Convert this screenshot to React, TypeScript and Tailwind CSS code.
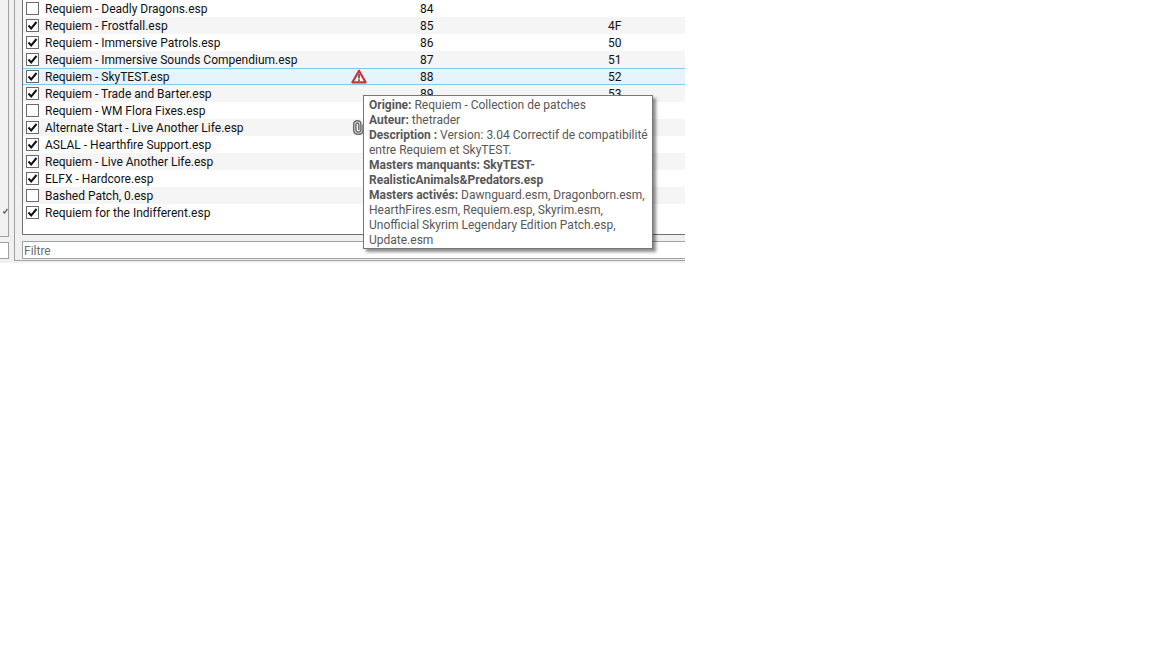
const plugins = [
  { name: "Requiem - Deadly Dragons.esp", on: false, prio: "84", idx: "" },
  { name: "Requiem - Frostfall.esp", on: true, prio: "85", idx: "4F" },
  { name: "Requiem - Immersive Patrols.esp", on: true, prio: "86", idx: "50" },
  { name: "Requiem - Immersive Sounds Compendium.esp", on: true, prio: "87", idx: "51" },
  { name: "Requiem - SkyTEST.esp", on: true, prio: "88", idx: "52", warn: true, selected: true },
  { name: "Requiem - Trade and Barter.esp", on: true, prio: "89", idx: "53" },
  { name: "Requiem - WM Flora Fixes.esp", on: false, prio: "", idx: "" },
  { name: "Alternate Start - Live Another Life.esp", on: true, prio: "", idx: "", clip: true },
  { name: "ASLAL - Hearthfire Support.esp", on: true, prio: "", idx: "" },
  { name: "Requiem - Live Another Life.esp", on: true, prio: "", idx: "" },
  { name: "ELFX - Hardcore.esp", on: true, prio: "", idx: "" },
  { name: "Bashed Patch, 0.esp", on: false, prio: "", idx: "" },
  { name: "Requiem for the Indifferent.esp", on: true, prio: "", idx: "" },
];

function WarnIcon() {
  return (
    <svg width="16" height="15" viewBox="0 0 16 15" className="-ml-[1px]">
      <path d="M8 1.8 L14.6 13.3 H1.4 Z" fill="#fdf4f4" stroke="#c8343c" strokeWidth="2.2" strokeLinejoin="round" />
      <rect x="7" y="5" width="2" height="4.5" fill="#6b6b6b" />
      <rect x="7" y="10.3" width="2" height="1.8" fill="#6b6b6b" />
    </svg>
  );
}

function ClipIcon() {
  return (
    <svg width="13" height="15" viewBox="0 0 12 15" fill="none" stroke="#6a6a6a" strokeWidth="1.5">
      <path d="M10.5 4.5 V10.5 C10.5 13 9 14.2 6 14.2 C3 14.2 1.2 13 1.2 10.5 V4 C1.2 2 2.6 0.8 4.8 0.8 C7 0.8 8.4 2 8.4 4 V10 C8.4 11.2 7.4 12 6 12 C4.6 12 3.4 11.2 3.4 10 V4.5 C3.4 3.6 4 3 4.9 3 C5.8 3 6.3 3.6 6.3 4.5 V10" />
    </svg>
  );
}

function Checkbox({ on }: { on: boolean }) {
  return (
    <span className="flex h-[13px] w-[13px] items-center justify-center border border-[#6a6a6a] bg-white">
      {on && (
        <svg width="11" height="11" viewBox="0 0 11 11" fill="none" stroke="#111" strokeWidth="2">
          <path d="M1.5 5.5 L4.2 8.5 L9.5 2" />
        </svg>
      )}
    </span>
  );
}

export default function App() {
  return (
    <div className="min-h-[648px] bg-white font-['Roboto',sans-serif] text-[12px] text-[#111]">
      <div className="relative h-[263px] w-[685px] overflow-hidden bg-[#f0f0f0]">
        <div className="flex h-[261px]">
          <div className="flex w-[9px] shrink-0 flex-col">
            <div className="relative h-[237px] border-r border-b border-[#a0a0a0]">
              <svg width="5" height="6" viewBox="0 0 5 6" fill="none" stroke="#666" strokeWidth="1.4" className="absolute right-0 top-[208px]">
                <path d="M0 3.5 L1.5 5 L4.5 1" />
              </svg>
            </div>
            <div className="mt-[5px] h-[17px] border-y border-r border-[#a0a0a0] bg-white" />
          </div>
          <div className="ml-[5px] flex min-w-0 flex-1 border-l border-b border-[#a0a0a0] pl-[7px]">
            <div className="flex min-w-0 flex-1 flex-col">
              <div className="h-[235px] border-l border-b border-[#707070] bg-white">
                {plugins.map((p, i) => (
                  <div
                    key={p.name}
                    className={
                      p.selected
                        ? "flex h-[17px] items-center border-y border-[#7ccbee] bg-[#e5f3fb]"
                        : i % 2 === 1
                          ? "flex h-[17px] items-center bg-[#f5f5f5]"
                          : "flex h-[17px] items-center"
                    }
                  >
                    <span className="ml-[3px] mr-[6px]">
                      <Checkbox on={p.on} />
                    </span>
                    <span className="h-[17px] w-[307px] whitespace-nowrap pt-[2px] leading-[15px]">{p.name}</span>
                    <span className="flex w-[68px] items-center">
                      {p.warn && <WarnIcon />}
                      {p.clip && <ClipIcon />}
                    </span>
                    <span className="h-[17px] w-[188px] pt-[2px] leading-[15px]">{p.prio}</span>
                    <span className="h-[17px] pt-[2px] leading-[15px]">{p.idx}</span>
                  </div>
                ))}
              </div>
              <div className="mt-[6px] h-[18px] border border-r-0 border-[#a0a0a8] bg-white pl-[1px] pt-[1px] leading-[16px] text-[#6d6d6d]">
                Filtre
              </div>
            </div>
          </div>
        </div>
        <div className="absolute left-[363px] top-[95px] h-[154px] w-[290px] whitespace-nowrap border border-[#767676] bg-white pl-[5px] pt-[2px] leading-[15px] text-[#575757] shadow-[3px_3px_3px_rgba(0,0,0,0.45)]">
          <b>Origine:</b> Requiem - Collection de patches
          <br />
          <b>Auteur:</b> thetrader
          <br />
          <b>Description :</b> Version: 3.04 Correctif de compatibilité
          <br />
          entre Requiem et SkyTEST.
          <br />
          <b>Masters manquants: SkyTEST-</b>
          <br />
          <b>RealisticAnimals&amp;Predators.esp</b>
          <br />
          <b>Masters activés:</b> Dawnguard.esm, Dragonborn.esm,
          <br />
          HearthFires.esm, Requiem.esp, Skyrim.esm,
          <br />
          Unofficial Skyrim Legendary Edition Patch.esp,
          <br />
          Update.esm
        </div>
      </div>
    </div>
  );
}
